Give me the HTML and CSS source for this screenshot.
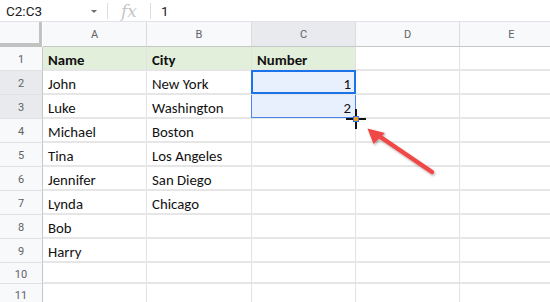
FILE: index.html
```html
<!DOCTYPE html>
<html>
<head>
<meta charset="utf-8">
<link rel="stylesheet" href="styles.css">
</head>
<body>
<div class="page">
  <div class="fbar">
    <div class="namebox">C2:C3</div>
    <div class="caret"></div>
    <div class="sep"></div>
    <div class="fx">fx</div>
    <div class="sep"></div>
    <div class="fval">1</div>
  </div>
  <div class="sheet">
    <div class="corner"></div>
    <div class="ch">A</div><div class="ch">B</div><div class="ch sel">C</div><div class="ch">D</div><div class="ch">E</div>

    <div class="rh">1</div><div class="c hd">Name</div><div class="c hd">City</div><div class="c hd">Number</div><div class="c"></div><div class="c"></div>
    <div class="rh sel">2</div><div class="c">John</div><div class="c">New York</div><div class="c num fill active">1</div><div class="c"></div><div class="c"></div>
    <div class="rh sel">3</div><div class="c">Luke</div><div class="c">Washington</div><div class="c num fill inrange">2</div><div class="c"></div><div class="c"></div>
    <div class="rh">4</div><div class="c">Michael</div><div class="c">Boston</div><div class="c"></div><div class="c"></div><div class="c"></div>
    <div class="rh">5</div><div class="c">Tina</div><div class="c">Los Angeles</div><div class="c"></div><div class="c"></div><div class="c"></div>
    <div class="rh">6</div><div class="c">Jennifer</div><div class="c">San Diego</div><div class="c"></div><div class="c"></div><div class="c"></div>
    <div class="rh">7</div><div class="c">Lynda</div><div class="c">Chicago</div><div class="c"></div><div class="c"></div><div class="c"></div>
    <div class="rh">8</div><div class="c">Bob</div><div class="c"></div><div class="c"></div><div class="c"></div><div class="c"></div>
    <div class="rh">9</div><div class="c">Harry</div><div class="c"></div><div class="c"></div><div class="c"></div><div class="c"></div>
    <div class="rh">10</div><div class="c"></div><div class="c"></div><div class="c"></div><div class="c"></div><div class="c"></div>
    <div class="rh">11</div><div class="c"></div><div class="c"></div><div class="c"></div><div class="c"></div><div class="c"></div>
  </div>
  <svg class="overlay" width="550" height="302" viewBox="0 0 550 302">
    <defs>
      <filter id="sh" x="-20%" y="-20%" width="140%" height="140%">
        <feDropShadow dx="1" dy="1.5" stdDeviation="1.2" flood-color="#000" flood-opacity="0.3"/>
      </filter>
    </defs>
    <g filter="url(#sh)">
      <line x1="432" y1="172" x2="376" y2="134" stroke="#f04646" stroke-width="4.5" stroke-linecap="round"/>
      <polygon points="367.5,128.5 385,133 373.5,144" fill="#f04646"/>
    </g>
    <rect x="346" y="118" width="20" height="2" fill="#111"/>
    <rect x="355" y="109" width="2" height="20" fill="#111"/>
    <rect x="353.5" y="116.5" width="5" height="5" fill="#f29a2e" stroke="#3b78d8" stroke-width="1"/>
  </svg>
</div>
</body>
</html>
```
FILE: styles.css
```css
html, body {
  margin: 0;
  padding: 0;
  background: #fff;
}
.page {
  position: relative;
  width: 550px;
  height: 302px;
  overflow: hidden;
  font-family: Roboto, "Liberation Sans", sans-serif;
}
.fbar {
  height: 21px;
  border-bottom: 1px solid #e1e3e6;
  display: flex;
  align-items: center;
}
.namebox {
  width: 84px;
  padding-left: 6px;
  font-size: 13.5px;
  color: #202124;
}
.caret {
  width: 0;
  height: 0;
  border-left: 3.5px solid transparent;
  border-right: 3.5px solid transparent;
  border-top: 3.5px solid #6b6e72;
  margin-left: 1px;
  margin-right: 10px;
  margin-top: 2px;
}
.sep {
  width: 1px;
  height: 16px;
  background: #dadce0;
}
.fx {
  width: 42px;
  text-align: center;
  font-family: "DejaVu Serif", "Liberation Serif", serif;
  font-style: italic;
  font-size: 17px;
  color: #c4c6c9;
  line-height: 20px;
}
.fval {
  padding-left: 10px;
  font-size: 13.5px;
  color: #202124;
}
.sheet {
  display: grid;
  grid-template-columns: 43px 104px 105px 104px 104px 104px;
  grid-template-rows: 25px repeat(9, 24px) 21px 21px;
}
.corner {
  background: #f8f9fa;
  border-right: 3px solid #c2c2c2;
  border-bottom: 4px solid #c2c2c2;
  margin-right: 1px;
  box-sizing: border-box;
}
.ch {
  background: #f8f9fa;
  border-right: 1px solid #dcdcdc;
  border-bottom: 1px solid #c6c6c6;
  display: flex;
  align-items: center;
  justify-content: center;
  padding-top: 1px;
  font-size: 11px;
  color: #5f6368;
  box-sizing: border-box;
}
.rh {
  background: #f8f9fa;
  border-right: 1px solid #c6c6c6;
  border-bottom: 1px solid #e0e0e0;
  display: flex;
  align-items: center;
  justify-content: center;
  padding-top: 2px;
  font-size: 11px;
  color: #5f6368;
  box-sizing: border-box;
}
.sel {
  background: #e8eaed;
}
.c {
  border-right: 1px solid #e2e2e2;
  border-bottom: 2px solid #e6e6e6;
  box-sizing: border-box;
  display: flex;
  align-items: center;
  padding: 3px 5px 0 5px;
  font-family: Carlito, Calibri, Lato, "Open Sans", sans-serif;
  font-size: 14.8px;
  color: #111;
  white-space: nowrap;
}
.hd {
  background: #e2efda;
  font-weight: bold;
}
.num {
  justify-content: flex-end;
  padding-right: 4px;
}
.fill {
  background: #e8f0fd;
  position: relative;
}
.active::after {
  content: "";
  position: absolute;
  left: -1px;
  top: -1px;
  right: -1px;
  bottom: -1px;
  border: 2px solid #1a73e8;
}
.inrange::after {
  content: "";
  position: absolute;
  left: -1px;
  top: 0;
  right: -1px;
  bottom: -1px;
  border: 1px solid #4a86e8;
  border-top: none;
}
.overlay {
  position: absolute;
  left: 0;
  top: 0;
}
```
